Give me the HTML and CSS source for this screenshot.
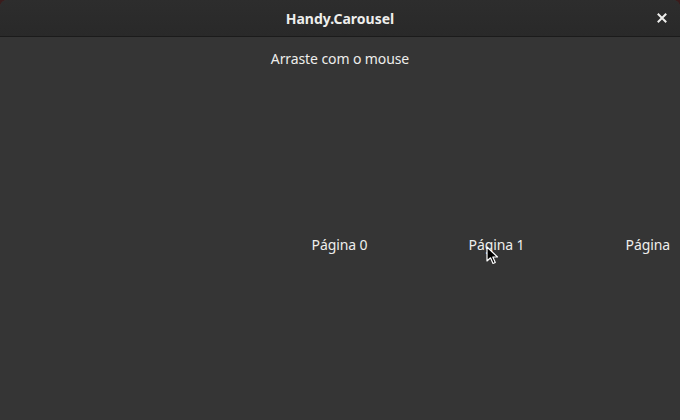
FILE: index.html
```html
<!DOCTYPE html>
<html>
<head>
<meta charset="utf-8">
<link rel="stylesheet" href="styles.css">
</head>
<body>
<div class="window">
  <header class="titlebar">
    <span class="title">Handy.Carousel</span>
    <span class="close">
      <svg width="10" height="10" viewBox="0 0 10 10"><path d="M1.5 1.5 L8.5 8.5 M8.5 1.5 L1.5 8.5" stroke="#eeeeec" stroke-width="2" stroke-linecap="square"/></svg>
    </span>
  </header>
  <main class="content">
    <div class="hint">Arraste com o mouse</div>
    <div class="carousel">
      <div class="track">
        <div class="page">Página 0</div>
        <div class="page">Página 1</div>
        <div class="page">Página 2</div>
      </div>
    </div>
  </main>
  <svg class="cursor" width="14" height="20" viewBox="0 0 14 20">
    <path d="M1 1 L1 15 L4.5 11.8 L7 17.5 L9.3 16.5 L6.8 11 L11.5 11 Z" fill="#000" stroke="#fff" stroke-width="1.2" stroke-linejoin="round"/>
  </svg>
</div>
</body>
</html>
```
FILE: styles.css
```css
html, body {
  margin: 0;
  padding: 0;
  background: #3a1c1c;
}
body {
  width: 680px;
  height: 420px;
  overflow: hidden;
  font-family: "Noto Sans", "DejaVu Sans", sans-serif;
}
.window {
  position: relative;
  width: 680px;
  height: 420px;
  background: #353535;
  border-radius: 7px 7px 0 0;
  overflow: hidden;
  display: flex;
  flex-direction: column;
}
.titlebar {
  height: 36px;
  flex: none;
  background: linear-gradient(#2d2d2d, #292929);
  border-bottom: 1px solid #1b1b1b;
  display: flex;
  align-items: center;
  justify-content: center;
  position: relative;
}
.title {
  color: #eeeeec;
  font-weight: bold;
  font-size: 14px;
  letter-spacing: 0;
}
.close {
  position: absolute;
  right: 13px;
  top: 13px;
  width: 10px;
  height: 10px;
  display: flex;
}
.content {
  flex: 1;
  display: flex;
  flex-direction: column;
}
.hint {
  color: #eeeeec;
  font-size: 14px;
  text-align: center;
  margin-top: 12px;
  line-height: 19px;
  letter-spacing: -0.1px;
}
.carousel {
  flex: 1;
  display: flex;
  align-items: center;
  width: 671px;
  overflow: hidden;
  padding-top: 0;
}
.track {
  display: flex;
  margin-left: 261px;
}
.page {
  width: 157px;
  flex: none;
  text-align: center;
  color: #eeeeec;
  font-size: 14px;
  letter-spacing: -0.1px;
  white-space: nowrap;
}
.cursor {
  position: absolute;
  left: 486px;
  top: 246px;
}
```
